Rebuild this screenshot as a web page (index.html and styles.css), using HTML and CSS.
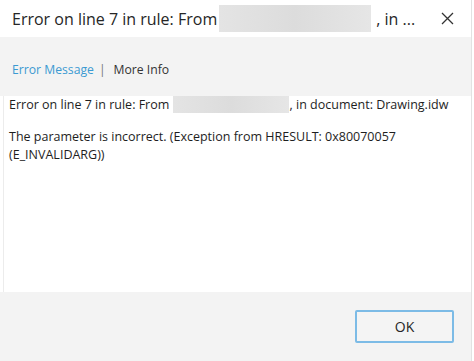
FILE: index.html
```html
<!DOCTYPE html>
<html>
<head>
<meta charset="utf-8">
<link rel="stylesheet" href="styles.css">
</head>
<body>
<div class="dialog">
  <div class="titlebar">
    <div class="title">Error on line 7 in rule: From <span class="blur title-blur"></span>, in ...</div>
    <div class="close">
      <svg width="13" height="13" viewBox="0 0 13 13"><path d="M1 1 L12 12 M12 1 L1 12" stroke="#333" stroke-width="1.3" fill="none"/></svg>
    </div>
  </div>
  <div class="tabs">
    <span class="tab active">Error Message</span>
    <span class="sep">|</span>
    <span class="tab">More Info</span>
  </div>
  <div class="content">
    <p class="line">Error on line 7 in rule: From <span class="blur body-blur"></span>, in document: Drawing.idw</p>
    <p class="line">The parameter is incorrect. (Exception from HRESULT: 0x80070057 (E_INVALIDARG))</p>
  </div>
  <div class="footer">
    <button class="ok">OK</button>
  </div>
</div>
</body>
</html>
```
FILE: styles.css
```css
html, body {
  margin: 0;
  padding: 0;
  background: #ffffff;
}
.dialog {
  width: 471px;
  height: 361px;
  display: flex;
  flex-direction: column;
  border-right: 1px solid #e2e2e2;
  font-family: "Open Sans", "Noto Sans", sans-serif;
  color: #262626;
}
.titlebar {
  height: 37px;
  display: flex;
  align-items: center;
  justify-content: space-between;
  background: #ffffff;
  flex: none;
}
.title {
  padding-left: 12px;
  font-size: 16px;
  white-space: nowrap;
  display: flex;
  align-items: center;
}
.blur {
  display: inline-block;
  background: linear-gradient(90deg, #e4e4e4, #dcdcdc 50%, #e6e6e6);
}
.title-blur {
  width: 152px;
  height: 27px;
  margin: 0 5px 0 2px;
}
.close {
  width: 40px;
  display: flex;
  justify-content: center;
  padding-right: 4px;
}
.tabs {
  height: 59px;
  background: #f3f3f3;
  flex: none;
  display: flex;
  align-items: center;
  padding-left: 12px;
  padding-top: 6px;
  box-sizing: border-box;
  font-family: "Open Sans", sans-serif;
  font-size: 12.2px;
}
.tab { color: #333; }
.tab.active { color: #3b9ad2; }
.sep { color: #777; margin: 0 8px 0 5px; }
.content {
  flex: 1;
  background: #ffffff;
  padding: 0 8px 0 5px;
  border-left: 1px solid #ececec;
  margin-left: 3px;
  font-family: "Open Sans", sans-serif;
  font-size: 12.5px;
  color: #1e1e1e;
  line-height: 18px;
}
.line { margin: 0 0 14px 0; }
.body-blur {
  width: 116px;
  height: 17px;
  vertical-align: -4px;
  margin: 0 1px 0 0;
}
.footer {
  height: 69px;
  flex: none;
  background: #f3f3f3;
  display: flex;
  align-items: flex-start;
  justify-content: flex-end;
  padding: 18px 17px 0 0;
  box-sizing: border-box;
}
.ok {
  width: 99px;
  height: 33px;
  border: 2px solid #7cbbe6;
  border-radius: 2px;
  background: #f4f4f4;
  font-family: "Open Sans", sans-serif;
  font-size: 14px;
  color: #262626;
}
```
